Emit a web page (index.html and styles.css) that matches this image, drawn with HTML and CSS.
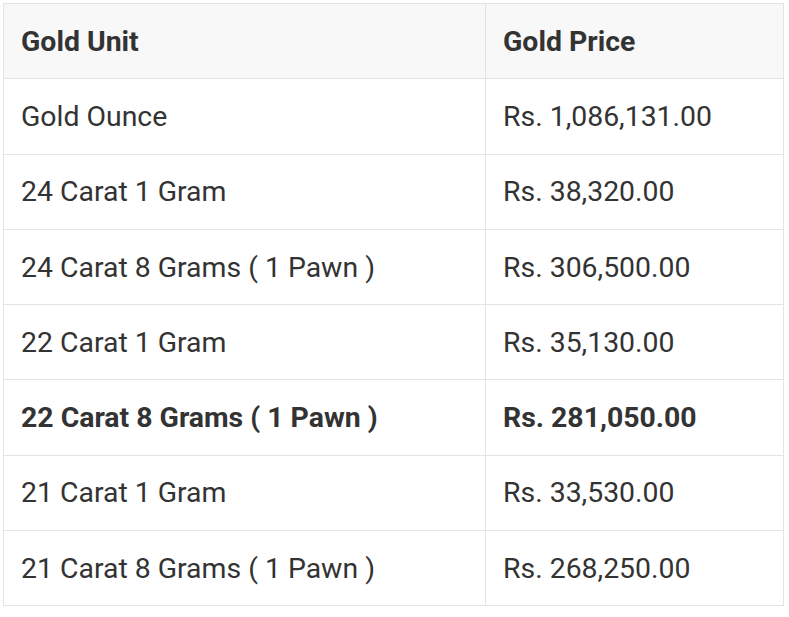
FILE: index.html
```html
<!DOCTYPE html>
<html>
<head>
<meta charset="utf-8">
<link rel="stylesheet" href="styles.css">
</head>
<body>
<div class="wrap">
<table class="prices">
  <thead>
    <tr><th class="c1">Gold Unit</th><th>Gold Price</th></tr>
  </thead>
  <tbody>
    <tr><td>Gold Ounce</td><td>Rs. 1,086,131.00</td></tr>
    <tr><td>24 Carat 1 Gram</td><td>Rs. 38,320.00</td></tr>
    <tr><td>24 Carat 8 Grams ( 1 Pawn )</td><td>Rs. 306,500.00</td></tr>
    <tr><td>22 Carat 1 Gram</td><td>Rs. 35,130.00</td></tr>
    <tr class="strong"><td>22 Carat 8 Grams ( 1 Pawn )</td><td>Rs. 281,050.00</td></tr>
    <tr><td>21 Carat 1 Gram</td><td>Rs. 33,530.00</td></tr>
    <tr><td>21 Carat 8 Grams ( 1 Pawn )</td><td>Rs. 268,250.00</td></tr>
  </tbody>
</table>
</div>
</body>
</html>
```
FILE: styles.css
```css
html, body {
  margin: 0;
  padding: 0;
  background: #ffffff;
}
.wrap {
  padding: 3px 5px 0 3px;
}
.prices {
  width: 781px;
  border-collapse: collapse;
  font-family: Roboto, "Liberation Sans", sans-serif;
  font-size: 28.4px;
  color: #333333;
  table-layout: fixed;
}
.prices th, .prices td {
  border: 1.5px solid #e4e4e4;
  height: 75.3px;
  padding: 0 0 0 17px;
  text-align: left;
  vertical-align: middle;
  box-sizing: border-box;
}
.prices th {
  background: #f8f8f8;
  font-weight: 700;
}
.prices th.c1 {
  width: 482px;
}
.prices td {
  font-weight: 400;
}
.prices tr.strong td {
  font-weight: 700;
}
```
